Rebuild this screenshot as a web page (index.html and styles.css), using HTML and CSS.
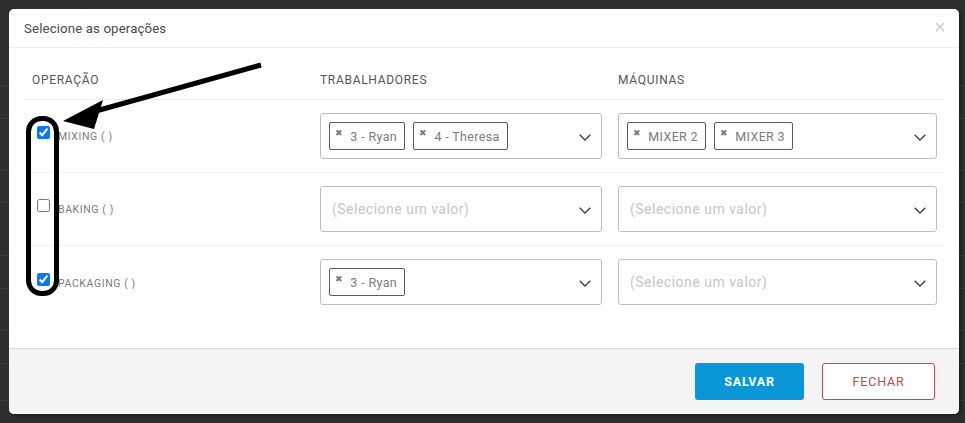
FILE: index.html
```html
<!DOCTYPE html>
<html lang="pt">
<head>
<meta charset="utf-8">
<title>Selecione as operações</title>
<link rel="stylesheet" href="styles.css">
</head>
<body>
<div class="backdrop">
  <div class="bg-row h85"></div>
  <div class="bg-row h33"></div>
  <div class="bg-row h52"></div>
  <div class="bg-row h32"></div>
  <div class="bg-row h53"></div>
  <div class="bg-row h33"></div>
  <div class="bg-row h42"></div>
  <div class="bg-row h33"></div>
  <div class="bg-row h37"></div>
</div>

<div class="modal">
  <div class="modal-header">
    <span class="modal-title">Selecione as operações</span>
    <button class="close" aria-label="Fechar">
      <svg width="10" height="10" viewBox="0 0 10 10"><path d="M1 1L9 9M9 1L1 9" stroke="#c9c9c9" stroke-width="1.3" fill="none"/></svg>
    </button>
  </div>
  <div class="modal-body">
    <div class="table">
      <div class="thead">
        <div class="th">OPERAÇÃO</div>
        <div class="th">TRABALHADORES</div>
        <div class="th">MÁQUINAS</div>
      </div>

      <div class="tr">
        <div class="td op"><input type="checkbox" checked><span class="op-label">MIXING ( )</span></div>
        <div class="td">
          <div class="select">
            <div class="chips">
              <span class="chip"><span class="chip-x">✖</span>3 - Ryan</span>
              <span class="chip"><span class="chip-x">✖</span>4 - Theresa</span>
            </div>
            <svg class="chev" width="12" height="7" viewBox="0 0 12 7"><path d="M0.7 0.7L6 6L11.3 0.7" stroke="#3d3d3d" stroke-width="1.3" fill="none"/></svg>
          </div>
        </div>
        <div class="td">
          <div class="select">
            <div class="chips">
              <span class="chip"><span class="chip-x">✖</span>MIXER 2</span>
              <span class="chip"><span class="chip-x">✖</span>MIXER 3</span>
            </div>
            <svg class="chev" width="12" height="7" viewBox="0 0 12 7"><path d="M0.7 0.7L6 6L11.3 0.7" stroke="#3d3d3d" stroke-width="1.3" fill="none"/></svg>
          </div>
        </div>
      </div>

      <div class="tr">
        <div class="td op"><input type="checkbox"><span class="op-label">BAKING ( )</span></div>
        <div class="td">
          <div class="select">
            <span class="placeholder">(Selecione um valor)</span>
            <svg class="chev" width="12" height="7" viewBox="0 0 12 7"><path d="M0.7 0.7L6 6L11.3 0.7" stroke="#3d3d3d" stroke-width="1.3" fill="none"/></svg>
          </div>
        </div>
        <div class="td">
          <div class="select">
            <span class="placeholder">(Selecione um valor)</span>
            <svg class="chev" width="12" height="7" viewBox="0 0 12 7"><path d="M0.7 0.7L6 6L11.3 0.7" stroke="#3d3d3d" stroke-width="1.3" fill="none"/></svg>
          </div>
        </div>
      </div>

      <div class="tr">
        <div class="td op"><input type="checkbox" checked><span class="op-label">PACKAGING ( )</span></div>
        <div class="td">
          <div class="select">
            <div class="chips">
              <span class="chip"><span class="chip-x">✖</span>3 - Ryan</span>
            </div>
            <svg class="chev" width="12" height="7" viewBox="0 0 12 7"><path d="M0.7 0.7L6 6L11.3 0.7" stroke="#3d3d3d" stroke-width="1.3" fill="none"/></svg>
          </div>
        </div>
        <div class="td">
          <div class="select">
            <span class="placeholder">(Selecione um valor)</span>
            <svg class="chev" width="12" height="7" viewBox="0 0 12 7"><path d="M0.7 0.7L6 6L11.3 0.7" stroke="#3d3d3d" stroke-width="1.3" fill="none"/></svg>
          </div>
        </div>
      </div>
    </div>
  </div>
  <div class="modal-footer">
    <button class="btn btn-primary">SALVAR</button>
    <button class="btn btn-outline">FECHAR</button>
  </div>
</div>

<svg class="annotation" width="965" height="423" viewBox="0 0 965 423">
  <line x1="261" y1="65" x2="96" y2="111" stroke="#000" stroke-width="5" stroke-linecap="butt"/>
  <polygon points="63,121 103,100 94,129" fill="#000"/>
  <rect x="28.5" y="118.5" width="28" height="175" rx="13" ry="13" fill="none" stroke="#000" stroke-width="5"/>
</svg>
</body>
</html>
```

FILE: styles.css
```css
* { box-sizing: border-box; }

html, body {
  margin: 0;
  padding: 0;
  width: 965px;
  height: 423px;
  overflow: hidden;
}

body {
  background: #2e2e2e;
  font-family: Roboto, "Liberation Sans", sans-serif;
  position: relative;
}

.backdrop {
  display: flex;
  flex-direction: column;
}

.bg-row { border-bottom: 1px solid #3b3b3b; }
.h85 { height: 86px; }
.h33 { height: 33px; }
.h52 { height: 52px; }
.h32 { height: 32px; }
.h53 { height: 53px; }
.h42 { height: 42px; }
.h37 { height: 37px; }

.modal {
  position: absolute;
  left: 9px;
  top: 9px;
  width: 950px;
  height: 405px;
  background: #fff;
  border-radius: 5px;
  overflow: hidden;
  display: flex;
  flex-direction: column;
  box-shadow: 2px 2px 3px rgba(0,0,0,0.35);
}

.modal-header {
  height: 39px;
  border-bottom: 1px solid #ececec;
  display: flex;
  align-items: center;
  justify-content: space-between;
  padding: 0 13px 0 15px;
  flex-shrink: 0;
}

.modal-title {
  font-size: 13.3px;
  color: #4a4a4a;
  letter-spacing: 0.1px;
}

.close {
  border: 0;
  background: none;
  padding: 0;
  width: 12px;
  height: 12px;
  display: flex;
  align-items: center;
  justify-content: center;
  margin-top: -2px;
}

.modal-body {
  flex: 1;
  padding: 14px 14px 0 15px;
}

.table {
  display: grid;
  grid-template-columns: 288px 298px 1fr;
}

.thead, .tr {
  display: contents;
}

.th {
  height: 38px;
  border-bottom: 1px solid #ececec;
  padding: 0 8px;
  display: flex;
  align-items: center;
  font-size: 12px;
  letter-spacing: 0.7px;
  color: #555;
  padding-bottom: 1px;
}

.td {
  height: 73px;
  border-bottom: 1px solid #f0f0f0;
  padding: 13px 8px 13px;
}

.tr:last-child .td { border-bottom: 0; }

.td.op {
  display: flex;
  align-items: center;
  padding-top: 0;
  padding-bottom: 0;
}

.td.op input {
  width: 13px;
  height: 13px;
  margin: 0 8px 7px 5px;
  accent-color: #0a75fe;
}

.op-label {
  font-size: 10.5px;
  color: #7b7b7b;
  letter-spacing: 0.6px;
  padding-top: 1px;
}

.select {
  height: 46px;
  border: 1px solid #bdbdc2;
  border-radius: 3px;
  padding: 0 10px 0 8px;
  display: flex;
  align-items: center;
  justify-content: space-between;
}

.chips {
  display: flex;
  gap: 8px;
}

.chip {
  height: 28px;
  border: 1px solid #555a63;
  border-radius: 2px;
  padding: 0 7px 0 5px;
  display: flex;
  align-items: center;
  font-size: 12.5px;
  color: #7a7a80;
  letter-spacing: 0.35px;
}

.chip-x {
  font-size: 8.5px;
  color: #7a7a7a;
  margin-right: 7px;
  position: relative;
  top: -3px;
}

.placeholder {
  font-size: 14px;
  color: #c6c6c6;
  margin-left: 3px;
  letter-spacing: 0.5px;
}

.chev { margin-top: 3px; }

.modal-footer {
  height: 66px;
  flex-shrink: 0;
  background: #f4f4f4;
  border-top: 1px solid #dcdcdc;
  display: flex;
  justify-content: flex-end;
  align-items: flex-start;
  padding: 14px 24px 0 0;
  gap: 18px;
}

.btn {
  height: 37px;
  font-family: Roboto, "Liberation Sans", sans-serif;
  font-size: 12.5px;
  letter-spacing: 0.8px;
  border-radius: 3px;
  cursor: pointer;
}

.btn-primary {
  width: 109px;
  background: #0a97d8;
  color: #fff;
  border: 0;
  font-weight: 700;
}

.btn-outline {
  width: 113px;
  background: #fff;
  color: #d4404f;
  border: 1px solid #d64150;
}

.annotation {
  position: absolute;
  left: 0;
  top: 0;
  pointer-events: none;
}
```
